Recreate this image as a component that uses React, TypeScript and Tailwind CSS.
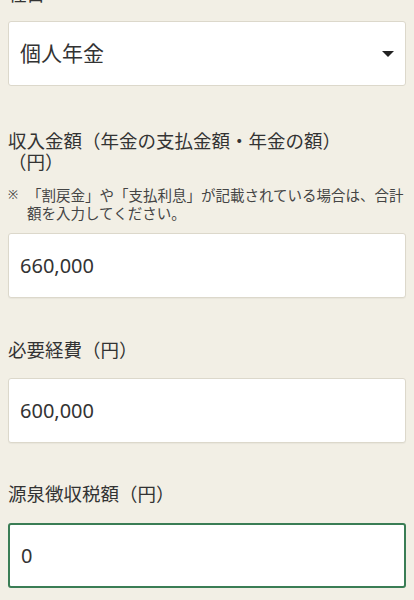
import React from 'react';

const jp = { fontFamily: '"Noto Sans", "Noto Sans CJK JP", sans-serif' };

function Label({ children, className = '' }: { children: React.ReactNode; className?: string }) {
  return (
    <p className={`text-[18.5px] text-[#333] ${className}`} style={jp}>
      {children}
    </p>
  );
}

function Field({ value, focused = false, className = '' }: { value: string; focused?: boolean; className?: string }) {
  return (
    <div
      className={`flex h-[65px] items-center rounded-[3px] bg-white pl-[11px] text-[20px] text-[#333] ${
        focused ? 'border-2 border-[#3a7d55] pl-[10px]' : 'border border-[#dcd8cb] shadow-[0_1px_1px_rgba(0,0,0,0.04)]'
      } ${className}`}
    >
      {value}
    </div>
  );
}

export default function App() {
  return (
    <div className="min-h-[600px] overflow-hidden bg-[#f2efe5]" style={jp}>
      <div className="-mt-[16px] px-2">
        <Label className="leading-[20px]">種目</Label>

        {/* select */}
        <div className="mt-[17px] flex h-[65px] items-center justify-between rounded-[3px] border border-[#dcd8cb] bg-white pl-[11px] pr-[11px] text-[21px] text-[#333]">
          <span>個人年金</span>
          <svg width="12" height="6" viewBox="0 0 12 6">
            <path d="M0 0 L12 0 L6 6 Z" fill="#222" />
          </svg>
        </div>

        <Label className="mt-[44px] leading-[21px]">
          収入金額（年金の支払金額・年金の額）
          <br />
          （円）
        </Label>

        <div className="mt-[14px] flex text-[14.5px] leading-[18px] text-[#444]">
          <span className="w-[19px] shrink-0 text-[12px]">※</span>
          <span>「割戻金」や「支払利息」が記載されている場合は、合計額を入力してください。</span>
        </div>

        <Field value="660,000" className="mt-[11px]" />

        <Label className="mt-[42px] leading-[20px]">必要経費（円）</Label>
        <Field value="600,000" className="mt-[18px]" />

        <Label className="mt-[41px] leading-[20px]">源泉徴収税額（円）</Label>
        <Field value="0" focused className="mt-[19px]" />
      </div>
    </div>
  );
}
